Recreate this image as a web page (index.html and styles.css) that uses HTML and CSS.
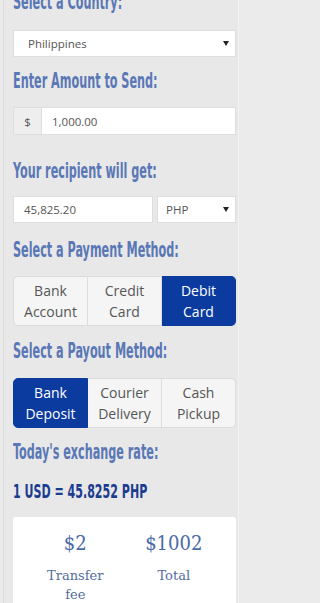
FILE: index.html
```html
<!DOCTYPE html>
<html lang="en">
<head>
<meta charset="utf-8">
<meta name="viewport" content="width=250">
<title>Send Money</title>
<link rel="stylesheet" href="styles.css">
</head>
<body>
<div class="panel">
  <div class="label label--first">Select a Country:</div>
  <div class="select select--country"><span>Philippines</span><span class="caret"></span></div>

  <div class="label label--amount">Enter Amount to Send:</div>
  <div class="input-group"><span class="addon">$</span><span class="field">1,000.00</span></div>

  <div class="label label--recipient">Your recipient will get:</div>
  <div class="recipient-row">
    <div class="field field--box">45,825.20</div>
    <div class="select select--currency"><span>PHP</span><span class="caret"></span></div>
  </div>

  <div class="label label--payment">Select a Payment Method:</div>
  <div class="btn-group btn-group--payment">
    <div class="btn">Bank<br>Account</div>
    <div class="btn">Credit<br>Card</div>
    <div class="btn btn--active">Debit<br>Card</div>
  </div>

  <div class="label label--payout">Select a Payout Method:</div>
  <div class="btn-group btn-group--payout">
    <div class="btn btn--active">Bank<br>Deposit</div>
    <div class="btn">Courier<br>Delivery</div>
    <div class="btn">Cash<br>Pickup</div>
  </div>

  <div class="label label--rate">Today's exchange rate:</div>
  <div class="rate"><span class="rate__text">1 USD = 45.8252 PHP</span></div>

  <div class="summary">
    <div class="summary__col">
      <div class="summary__num">$2</div>
      <div class="summary__cap">Transfer fee</div>
    </div>
    <div class="summary__col">
      <div class="summary__num">$1002</div>
      <div class="summary__cap">Total</div>
    </div>
  </div>
</div>
</body>
</html>
```
FILE: styles.css
```css
html, body {
  margin: 0;
  padding: 0;
}
html {
  width: 250px;
  height: 603px;
  overflow: hidden;
  background: #ebebeb;
}
body {
  width: 250px;
  height: 603px;
  overflow: hidden;
  background: #ebebeb;
  font-family: "Open Sans", "DejaVu Sans", sans-serif;
}
.panel {
  display: flow-root;
  margin-left: 3px;
  width: 236px;
  height: 620px;
  box-sizing: border-box;
  border-left: 1px solid #dcdcdc;
  border-right: 1px solid #f2f2f2;
  background: #e8e8e8;
  padding: 0 2px 0 9px;
}
.label {
  font-family: "DejaVu Sans Condensed", "DejaVu Sans", sans-serif;
  font-weight: bold;
  font-size: 21.5px;
  line-height: 22px;
  height: 22px;
  color: #5a77b6;
  white-space: nowrap;
  transform: scaleX(0.58);
  transform-origin: left center;
}
.label--first { margin-top: -9px; }
.label--amount { margin-top: 13px; }
.label--recipient { margin-top: 25px; }
.label--payment { margin-top: 16px; }
.label--payout { margin-top: 14px; }
.label--rate { margin-top: 13px; }

.select {
  display: flex;
  align-items: center;
  box-sizing: border-box;
  background: #fff;
  border: 1px solid #dedede;
  font-size: 11.5px;
  color: #555;
}
.select--country {
  margin-top: 17px;
  height: 27px;
  padding: 0 6px 0 14px;
}
.caret {
  margin-left: auto;
  width: 0;
  height: 0;
  border-left: 3px solid transparent;
  border-right: 3px solid transparent;
  border-top: 5px solid #222;
}

.input-group {
  margin-top: 15px;
  display: flex;
  height: 28px;
  box-sizing: border-box;
  border: 1px solid #dedede;
  background: #fff;
  font-size: 11.5px;
  color: #555;
}
.addon {
  width: 27px;
  background: #eeeeee;
  border-right: 1px solid #dedede;
  display: flex;
  align-items: center;
  justify-content: center;
}
.field {
  display: flex;
  align-items: center;
  padding-left: 10px;
  color: #555;
  font-size: 11.5px;
}
.recipient-row {
  margin-top: 14px;
  display: flex;
  gap: 4px;
  height: 27px;
}
.field--box {
  width: 140px;
  box-sizing: border-box;
  background: #fff;
  border: 1px solid #dedede;
  padding-left: 10px;
}
.select--currency {
  flex: 1;
  padding: 0 6px 0 8px;
}

.btn-group {
  display: flex;
  height: 50px;
}
.btn-group--payment { margin-top: 15px; }
.btn-group--payout { margin-top: 16px; }
.btn {
  flex: 1;
  box-sizing: border-box;
  display: flex;
  align-items: center;
  justify-content: center;
  text-align: center;
  font-size: 14px;
  line-height: 21px;
  color: #555;
  background: #f5f5f5;
  border: 1px solid #dcdcdc;
  border-left-width: 0;
}
.btn:first-child {
  border-left-width: 1px;
  border-radius: 5px 0 0 5px;
}
.btn:last-child {
  border-radius: 0 5px 5px 0;
}
.btn--active {
  background: #0b3b9f;
  border-color: #0b3b9f;
  color: #fff;
}

.rate {
  margin-top: 19px;
  height: 20px;
  line-height: 20px;
}
.rate__text {
  display: inline-block;
  font-family: "DejaVu Sans Condensed", "DejaVu Sans", sans-serif;
  font-weight: bold;
  font-size: 19.5px;
  color: #1c3c90;
  white-space: nowrap;
  transform: scaleX(0.63);
  transform-origin: left center;
}

.summary {
  margin-top: 15px;
  background: #fff;
  border-radius: 3px;
  padding: 14px 13px 20px;
  display: flex;
}
.summary__col {
  flex: 1;
  text-align: center;
  padding: 0 12px;
}
.summary__num {
  font-family: "DejaVu Serif Condensed", "DejaVu Serif", serif;
  font-stretch: condensed;
  font-size: 20px;
  line-height: 24px;
  color: #4b6aa8;
}
.summary__cap {
  margin-top: 11px;
  font-family: "DejaVu Serif", serif;
  font-size: 13px;
  line-height: 19px;
  color: #536d9e;
}
```
